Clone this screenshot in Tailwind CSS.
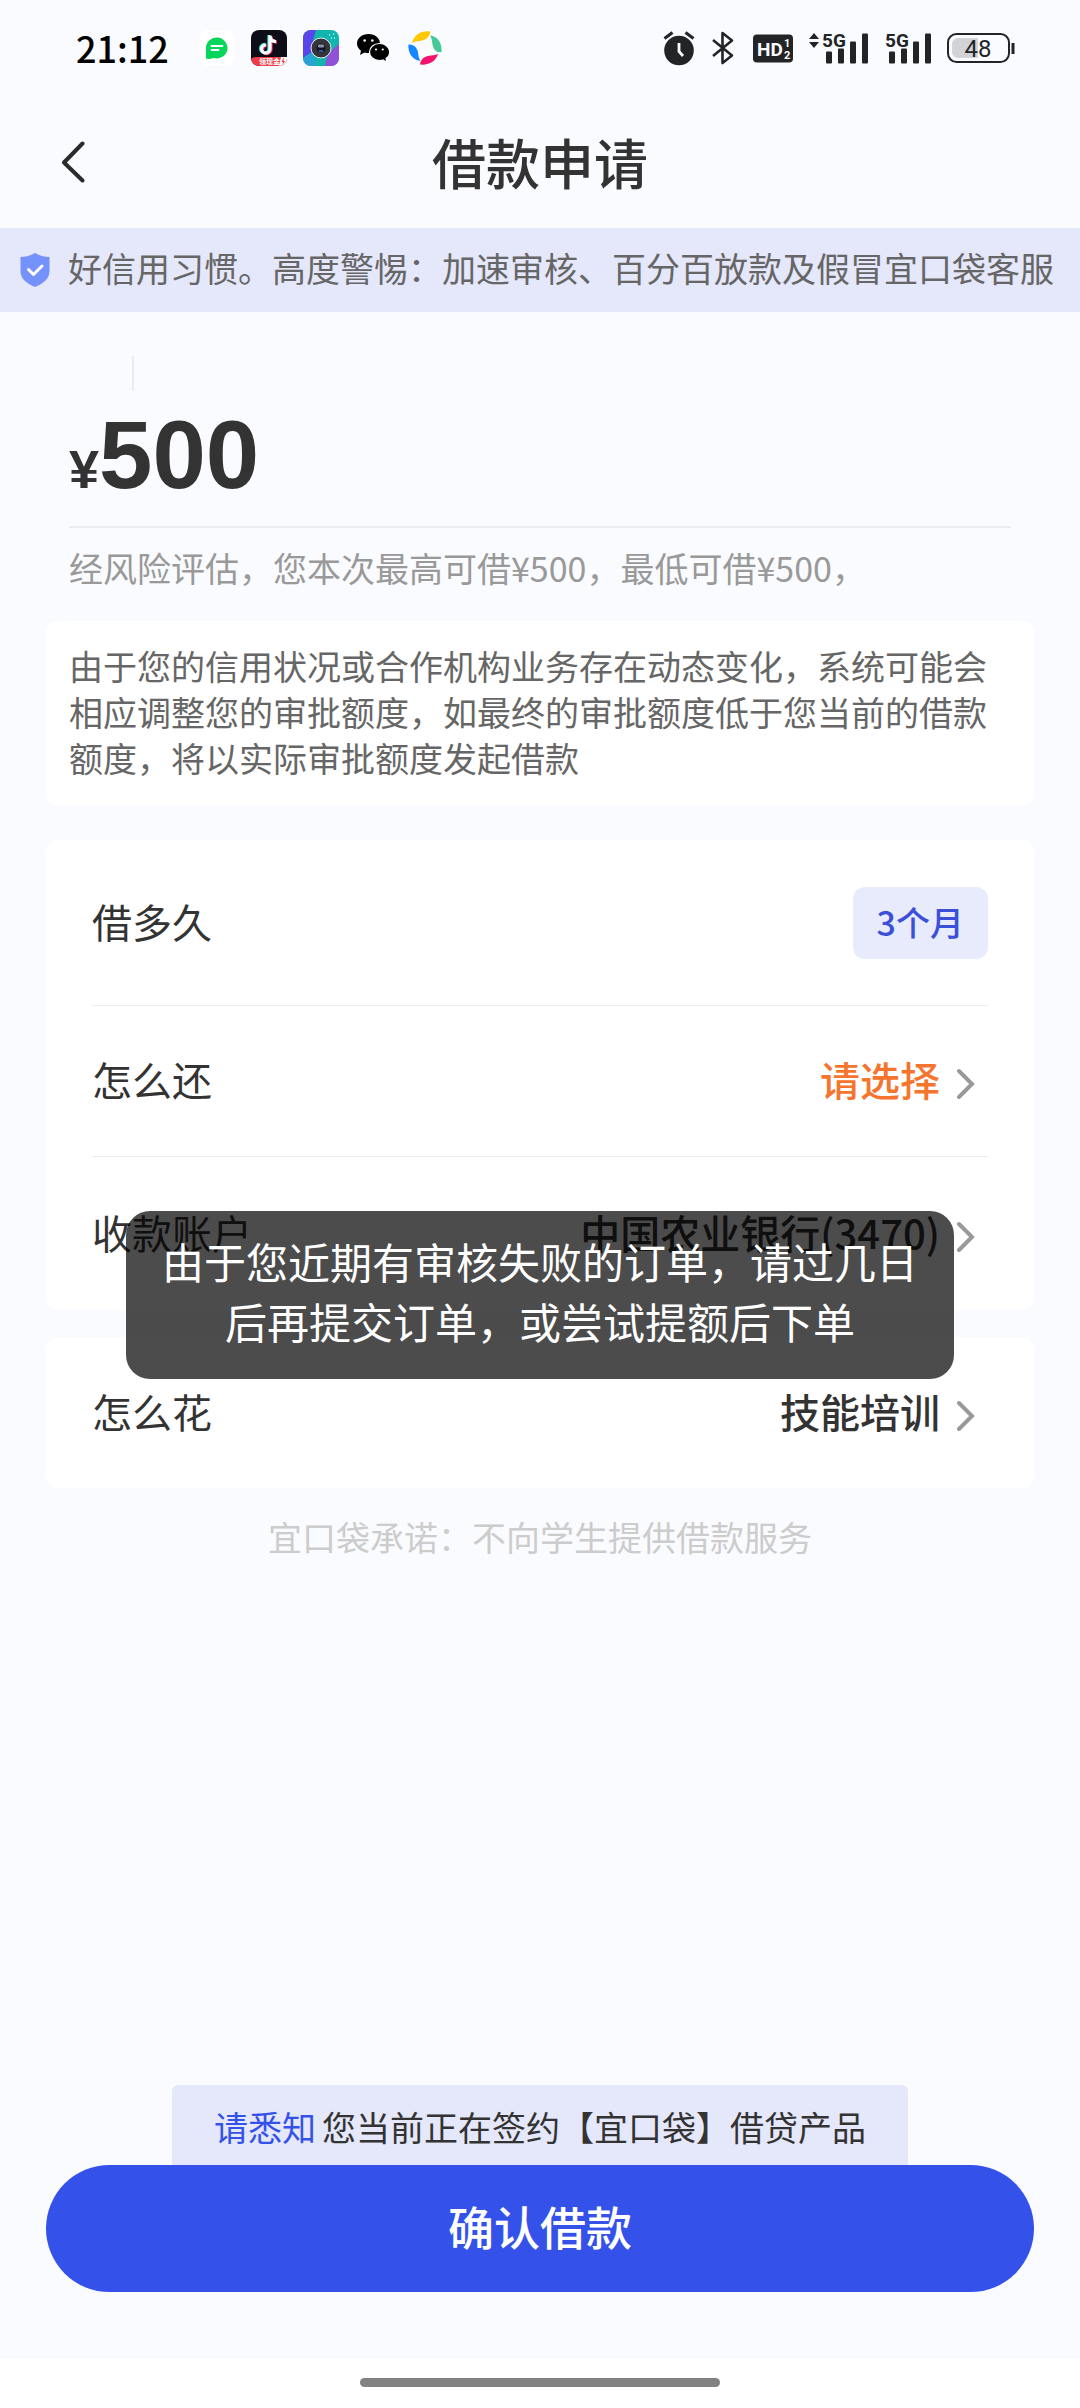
<!DOCTYPE html>
<html lang="zh-CN">
<head>
<meta charset="utf-8">
<meta name="viewport" content="width=device-width, initial-scale=1">
<title>借款申请</title>
<script src="https://cdn.jsdelivr.net/npm/@tailwindcss/browser@4"></script>
</head>
<body class="flex min-h-screen flex-col bg-[#fafbff] font-['Noto_Sans_CJK_SC',sans-serif] text-[#333]">

<!-- Status bar -->
<div class="flex h-24 shrink-0 items-center justify-between pr-[65px] pl-[76px]">
  <div class="flex items-center">
    <time class="pb-[2px] text-[36px] leading-[36px] font-medium text-black">21:12</time>
    <div class="ml-[30px] flex items-center gap-4">
      <!-- Messages -->
      <svg class="size-9" viewBox="0 0 36 36" aria-hidden="true">
        <rect x="0.5" y="0.5" width="35" height="35" rx="8" fill="#fff"/>
        <path d="M18 7.500a11 10.500 0 1 1-3.500 20.600c-2.500.9-5 1-7.500.7V18A11 10.500 0 0 1 18 7.500z" fill="#04d65b"/>
        <path d="M12.500 16h11M12.500 20h7" stroke="#fff" stroke-width="1.800" stroke-linecap="round"/>
      </svg>
      <!-- Short video -->
      <svg class="size-9" viewBox="0 0 36 36" aria-hidden="true">
        <defs><clipPath id="tk"><rect width="36" height="36" rx="8"/></clipPath></defs>
        <g clip-path="url(#tk)">
          <rect width="36" height="36" fill="#0d0d18"/>
          <g fill="none" stroke-width="3.200">
            <path d="M18 5v13.500a4.200 4.200 0 1 1-4.200-4.200M18 6c.5 3 2.800 5 6 5.200" stroke="#25f4ee"/>
            <path d="M20 6v13.500a4.200 4.200 0 1 1-4.200-4.200M20 7c.5 3 2.800 5 6 5.200" stroke="#fe2c55"/>
            <path d="M19 5.500V19a4.200 4.200 0 1 1-4.200-4.200M19 6.500c.5 3 2.800 5 6 5.200" stroke="#fff"/>
          </g>
          <path d="M0 29q2-2 6-2h30v9H0z" fill="#f23a48"/>
          <path d="M28 36l2-9h6v9z" fill="#fff"/>
          <path d="M32.500 28l-2 4h1.500l-.5 3 2.500-4h-1.500l.5-3z" fill="#f23a48"/>
          <text x="8" y="34" font-size="7" font-weight="700" fill="#fff">领现金</text>
        </g>
      </svg>
      <!-- Camera -->
      <svg class="size-9" viewBox="0 0 36 36" aria-hidden="true">
        <defs><clipPath id="cm"><rect width="36" height="36" rx="8"/></clipPath></defs>
        <g clip-path="url(#cm)">
          <rect width="36" height="36" fill="#12b5ae"/>
          <path d="M0 0h13l-3 10-1 12-9 6z" fill="#5a46e8"/>
          <path d="M36 14v22H22l2-9 6-8z" fill="#9150d8"/>
          <path d="M0 28l9-6 4 14H0z" fill="#2aa2d8"/>
          <path d="M26 5h1M30 4h1M28 8h1M31 8h1" stroke="#c4f5ef" stroke-width="1.400"/>
          <circle cx="18" cy="18" r="10" fill="#33353a" stroke="#e8e8ee" stroke-width="1"/>
          <circle cx="18" cy="18" r="4.500" fill="#14151c"/>
          <rect x="15" y="14.500" width="6" height="3" rx="1" fill="#8b93a8"/>
          <path d="M16 20h4v2h-4z" fill="#2b55b8"/>
        </g>
      </svg>
      <!-- Chat -->
      <svg class="size-9" viewBox="0 0 36 36" aria-hidden="true">
        <path d="M13.500 4C7 4 2 8.200 2 13.500c0 3 1.600 5.500 4 7.200L5 25l4.600-2.600c1.300.4 2.600.6 3.900.6C20 23 25 18.800 25 13.500S20 4 13.500 4z" fill="#000"/>
        <path d="M24.500 13.500C18.800 13.500 14.500 17.200 14.500 22s4.300 8.500 10 8.500c1.200 0 2.400-.2 3.500-.5l4 2.200-1-3.600c2.300-1.600 3.700-3.900 3.700-6.600 0-4.800-4.500-8.500-10.200-8.500z" fill="#000" stroke="#fafbff" stroke-width="1.200"/>
        <g fill="#fafbff"><circle cx="9.700" cy="10.500" r="1.300"/><circle cx="17.300" cy="10.500" r="1.300"/><circle cx="21" cy="19.500" r="1.100"/><circle cx="27.800" cy="19.500" r="1.100"/></g>
      </svg>
      <!-- Browser -->
      <svg class="size-9" viewBox="0 0 36 36" aria-hidden="true">
        <path d="M5 13C7 5 14 .5 23 1.500c.5 4-3 8-8 9-4 .8-7 .5-10 2.500z" fill="#ffc800"/>
        <path d="M23 5.500C31 6 35.500 14 34.500 22c-4 1-7-1-8.500-5.500-1.200-4-.5-7-3-11z" fill="#45c99b"/>
        <path d="M31 24c-2 7-9 11.500-18 10.500.5-4 3-7.500 8-8.500 4-.8 7-.5 10-2z" fill="#f5106b"/>
        <path d="M13.500 31C5.500 30 .5 22.500 1.500 14.500 5.500 14 9 16 10.500 20.500c1.200 4 .5 6.500 3 10.500z" fill="#1686ff"/>
      </svg>
    </div>
  </div>

  <div class="flex items-center text-[#222426]">
    <!-- Alarm -->
    <svg class="h-9 w-8" viewBox="0 0 32 36" aria-hidden="true">
      <circle cx="16" cy="20.500" r="14.800" fill="currentColor"/>
      <path d="M1.500 8.500l8-6M30.500 8.500l-8-6" stroke="currentColor" stroke-width="3"/>
      <path d="M16 13v8.500l4 4.500" fill="none" stroke="#fafbff" stroke-width="2.800"/>
    </svg>
    <!-- Bluetooth -->
    <svg class="ml-4 h-9 w-6" viewBox="0 0 24 36" aria-hidden="true">
      <path d="M2 10l19 15.500L11.500 33V3L21 10.500 2 26" fill="none" stroke="currentColor" stroke-width="2.600" stroke-linejoin="round"/>
    </svg>
    <!-- HD voice -->
    <svg class="ml-[18px] h-9 w-10" viewBox="0 0 40 36" aria-hidden="true">
      <rect y="4.500" width="40" height="28" rx="4" fill="currentColor"/>
      <g fill="#fafbff" font-family="Roboto, sans-serif" font-weight="700">
        <text x="4" y="26" font-size="19">HD</text>
        <text x="31" y="17" font-size="11">1</text><text x="31" y="29" font-size="11">2</text>
      </g>
    </svg>
    <!-- Signal, first SIM -->
    <svg class="ml-4 h-9 w-[60px] overflow-visible" viewBox="0 0 60 36" fill="currentColor" aria-hidden="true">
      <path d="M0 9l5-6 5 6zM0 12h10l-5 6z"/>
      <text x="13" y="17" font-family="Roboto, sans-serif" font-size="19" font-weight="700">5G</text>
      <rect x="17" y="21.500" width="6" height="12" rx="1"/><rect x="29" y="18.500" width="6" height="15" rx="1"/><rect x="41" y="11.500" width="6" height="22" rx="1"/><rect x="53" y="3.500" width="6" height="30" rx="1"/>
    </svg>
    <!-- Signal, second SIM -->
    <svg class="ml-4 h-9 w-12 overflow-visible" viewBox="0 0 48 36" fill="currentColor" aria-hidden="true">
      <text x="0" y="17" font-family="Roboto, sans-serif" font-size="19" font-weight="700">5G</text>
      <rect x="4" y="21.500" width="6" height="12" rx="1"/><rect x="16" y="18.500" width="6" height="15" rx="1"/><rect x="28" y="11.500" width="6" height="22" rx="1"/><rect x="40" y="3.500" width="6" height="30" rx="1"/>
    </svg>
    <!-- Battery -->
    <svg class="ml-[14px] h-9 w-[68px]" viewBox="0 0 68 36" aria-hidden="true">
      <path d="M11 8h20v20H11a6 6 0 0 1-6-6v-8a6 6 0 0 1 6-6z" fill="#d2d3d6"/>
      <rect x="1" y="4" width="61" height="28" rx="8.500" fill="none" stroke="currentColor" stroke-width="2"/>
      <path d="M66 13v11" stroke="currentColor" stroke-width="3"/>
      <text x="31" y="26.500" text-anchor="middle" font-family="Roboto, sans-serif" font-size="24" fill="currentColor">48</text>
    </svg>
  </div>
</div>

<!-- Title bar -->
<header class="grid h-[132px] shrink-0 grid-cols-[1fr_auto_1fr] items-center px-[60px]">
  <button type="button" aria-label="返回" class="justify-self-start">
    <svg class="h-[42px] w-[26px]" viewBox="0 0 26 42" fill="none" stroke="#2b2b2b" stroke-width="4" stroke-linecap="round" stroke-linejoin="round"><path d="M22.500 2.500L4 21.500l18.500 18"/></svg>
  </button>
  <h1 class="text-[54px] leading-[64px] font-medium">借款申请</h1>
</header>

<!-- Scrolling notice -->
<div class="flex h-[84px] shrink-0 items-center gap-[18px] bg-[#e5e7fa] pr-4 pl-5">
  <svg class="h-[34px] w-[30px] shrink-0" viewBox="0 0 30 34" aria-hidden="true">
    <path d="M15 0c4.500 2.500 9 4 14.500 4v14c0 8-6.500 12.500-14.500 16C7 30.500.5 26 .5 18V4C6 4 10.500 2.500 15 0z" fill="#7591fb"/>
    <path d="M8.500 16.500l5 5 8.500-8.500" fill="none" stroke="#fff" stroke-width="3" stroke-linecap="round" stroke-linejoin="round"/>
  </svg>
  <p class="min-w-0 flex-1 overflow-hidden pt-1 pb-2 text-[34px] leading-[52px] whitespace-nowrap text-[#666]">好信用习惯。高度警惕：加速审核、百分百放款及假冒宜口袋客服</p>
</div>

<main class="relative flex flex-1 flex-col px-[46px]">
  <!-- Amount -->
  <section class="px-[23px] pt-11">
    <div class="ml-[63px] h-[35px] w-[2px] bg-[#ececee]"></div>
    <div class="flex h-[137px] items-baseline border-b-2 border-[#ececee] pt-[14px] font-['Liberation_Sans',sans-serif] font-bold">
      <label for="amount" class="text-[54px] leading-[100px]">¥</label>
      <input id="amount" type="text" inputmode="numeric" value="500" class="min-w-0 flex-1 bg-transparent text-[96px] leading-[100px] outline-none">
    </div>
    <p class="mt-[17px] text-[34px] leading-[46px] text-[#999]">经风险评估，您本次最高可借¥500，最低可借¥500，</p>
  </section>

  <p class="mt-[30px] rounded-xl bg-white px-[23px] pt-[22px] pb-[25px] text-[34px] leading-[46px] text-[#666]">由于您的信用状况或合作机构业务存在动态变化，系统可能会相应调整您的审批额度，如最终的审批额度低于您当前的借款额度，将以实际审批额度发起借款</p>

  <!-- Loan terms -->
  <section class="mt-[34px] rounded-xl bg-white px-[46px] text-[40px] leading-[56px]">
    <div class="flex h-[166px] items-center justify-between border-b border-[#ececec] pb-1">
      <span>借多久</span>
      <button type="button" class="mt-1 h-[72px] rounded-xl bg-[#e8ebfc] px-6 pb-[2px] text-[34px] font-medium text-[#3b4fd8]">3个月</button>
    </div>
    <div class="flex h-[151px] items-center justify-between border-b border-[#ececec] pb-1">
      <span>怎么还</span>
      <button type="button" class="flex items-center gap-4 pr-3 font-medium text-[#f5752f]">请选择
        <svg class="mt-2 h-8 w-5" viewBox="0 0 20 32" fill="none" stroke="#999" stroke-width="4" stroke-linecap="round"><path d="M3 4l13 13L3 30"/></svg>
      </button>
    </div>
    <div class="flex h-[153px] items-center justify-between pb-1">
      <span>收款账户</span>
      <button type="button" class="flex items-center gap-4 pr-3 font-medium">中国农业银行(3470)
        <svg class="mt-2 h-8 w-5" viewBox="0 0 20 32" fill="none" stroke="#999" stroke-width="4" stroke-linecap="round"><path d="M3 4l13 13L3 30"/></svg>
      </button>
    </div>
  </section>

  <section class="mt-[27px] flex h-[151px] items-center justify-between rounded-xl bg-white px-[46px] pb-1 text-[40px] leading-[56px]">
    <span>怎么花</span>
    <button type="button" class="flex items-center gap-4 pr-3 font-medium">技能培训
      <svg class="mt-2 h-8 w-5" viewBox="0 0 20 32" fill="none" stroke="#999" stroke-width="4" stroke-linecap="round"><path d="M3 4l13 13L3 30"/></svg>
    </button>
  </section>

  <p class="mt-[26px] text-center text-[34px] leading-[46px] text-[#ccc]">宜口袋承诺：不向学生提供借款服务</p>

  <!-- Toast -->
  <div role="status" class="absolute inset-x-[126px] top-[899px] rounded-3xl bg-black/70 px-9 pt-5 pb-7 text-center text-[42px] leading-[60px] text-white">由于您近期有审核失败的订单，请过几日后再提交订单，或尝试提额后下单</div>
</main>

<footer class="flex shrink-0 flex-col items-center px-[46px] pb-[67px]">
  <p class="flex h-20 items-center gap-[6px] rounded-t-md bg-[#e5e7fa] px-[42px] pt-1 text-[34px] leading-[46px]"><span class="text-[#3452ea]">请悉知</span><span>您当前正在签约【宜口袋】借贷产品</span></p>
  <button type="button" class="h-[127px] w-full rounded-full bg-[#3452ea] pb-2 text-[46px] leading-[60px] font-medium text-white">确认借款</button>
</footer>

<!-- Gesture bar -->
<div class="flex h-[49px] shrink-0 items-center justify-center bg-white pb-[2px]">
  <div class="h-[9px] w-1/3 rounded-full bg-[#828282]"></div>
</div>
</body>
</html>
